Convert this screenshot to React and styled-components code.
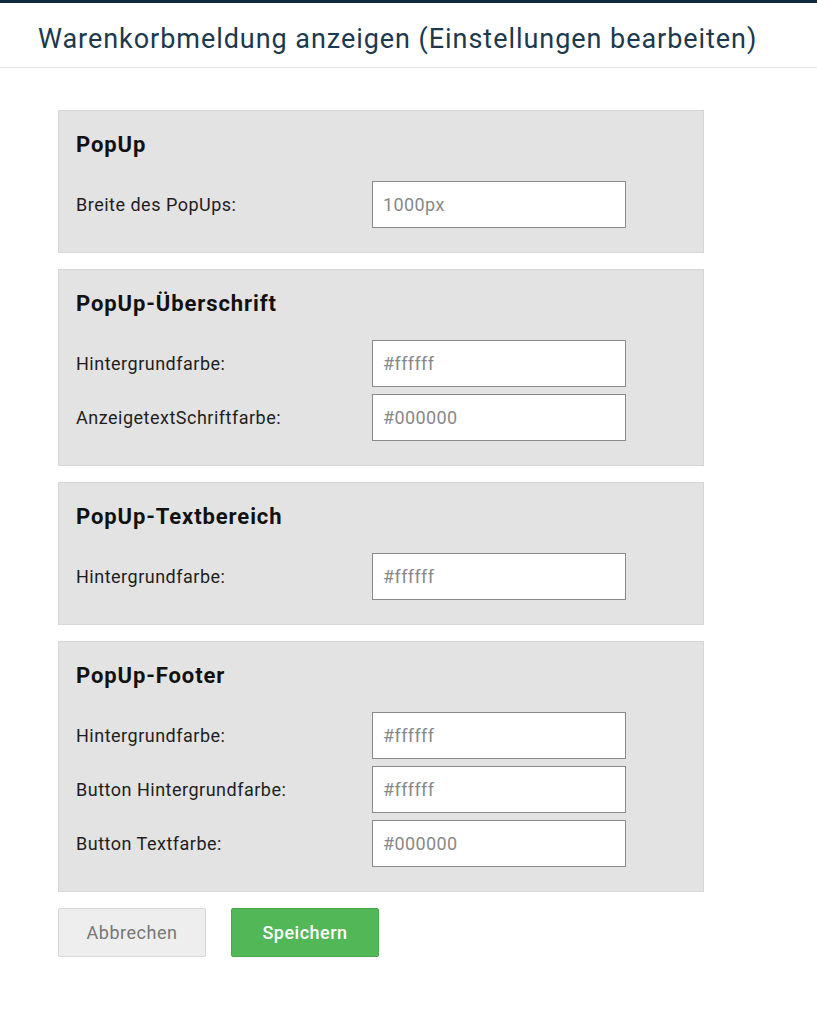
import React from "react";
import styled, { createGlobalStyle } from "styled-components";

const GlobalStyle = createGlobalStyle`
  body {
    margin: 0;
    background: #ffffff;
    font-family: Roboto, "Liberation Sans", Arial, sans-serif;
  }
`;

const Page = styled.div`
  width: 817px;
  min-height: 1025px;
  border-top: 3px solid #0f283a;
  box-sizing: border-box;
`;

const Header = styled.div`
  height: 65px;
  box-sizing: border-box;
  display: flex;
  align-items: center;
  padding: 8px 0 0 38px;
  border-bottom: 1px solid #e2e2e2;
`;

const Title = styled.h1`
  margin: 0;
  font-size: 27px;
  letter-spacing: 0.95px;
  font-weight: 400;
  color: #1c394d;
`;

const Content = styled.div`
  padding: 42px 0 0 58px;
  width: 646px;
`;

const Panel = styled.section`
  background: #e3e3e3;
  border: 1px solid #d6d6d6;
  padding: 21px 0 24px 17px;
  margin-bottom: 16px;
  display: flex;
  flex-direction: column;
  gap: 7px;
`;

const PanelTitle = styled.h2`
  margin: 0 0 16px;
  font-size: 22px;
  letter-spacing: 0.9px;
  line-height: 26px;
  font-weight: 700;
  color: #111;
`;

const Row = styled.label`
  display: grid;
  grid-template-columns: 296px 254px;
  align-items: center;
`;

const Label = styled.span`
  font-size: 18px;
  letter-spacing: 0.5px;
  color: #1e1e1e;
`;

const Input = styled.input`
  box-sizing: border-box;
  height: 47px;
  width: 254px;
  border: 1px solid #8a8a8a;
  background: #fff;
  padding: 0 10px;
  font-family: inherit;
  font-size: 18px;
  letter-spacing: 0.4px;
  color: #888;
  outline: none;
`;

const Actions = styled.div`
  display: flex;
  gap: 25px;
`;

const Button = styled.button`
  box-sizing: border-box;
  width: 148px;
  height: 49px;
  border-radius: 2px;
  font-family: inherit;
  font-size: 18px;
  letter-spacing: 0.5px;
  cursor: pointer;
  border: 1px solid ${(p) => (p.$primary ? "#47a84c" : "#d8d8d8")};
  background: ${(p) => (p.$primary ? "#52b757" : "#eeeeee")};
  color: ${(p) => (p.$primary ? "#ffffff" : "#777777")};
  font-weight: ${(p) => (p.$primary ? 500 : 400)};
`;

const sections = [
  { title: "PopUp", fields: [["Breite des PopUps:", "1000px"]] },
  {
    title: "PopUp-Überschrift",
    fields: [
      ["Hintergrundfarbe:", "#ffffff"],
      ["AnzeigetextSchriftfarbe:", "#000000"],
    ],
  },
  { title: "PopUp-Textbereich", fields: [["Hintergrundfarbe:", "#ffffff"]] },
  {
    title: "PopUp-Footer",
    fields: [
      ["Hintergrundfarbe:", "#ffffff"],
      ["Button Hintergrundfarbe:", "#ffffff"],
      ["Button Textfarbe:", "#000000"],
    ],
  },
];

export default function App() {
  return (
    <Page>
      <GlobalStyle />
      <Header>
        <Title>Warenkorbmeldung anzeigen (Einstellungen bearbeiten)</Title>
      </Header>
      <Content>
        {sections.map((s) => (
          <Panel key={s.title}>
            <PanelTitle>{s.title}</PanelTitle>
            {s.fields.map(([label, value], i) => (
              <Row key={i}>
                <Label>{label}</Label>
                <Input defaultValue={value} />
              </Row>
            ))}
          </Panel>
        ))}
        <Actions>
          <Button>Abbrechen</Button>
          <Button $primary>Speichern</Button>
        </Actions>
      </Content>
    </Page>
  );
}
